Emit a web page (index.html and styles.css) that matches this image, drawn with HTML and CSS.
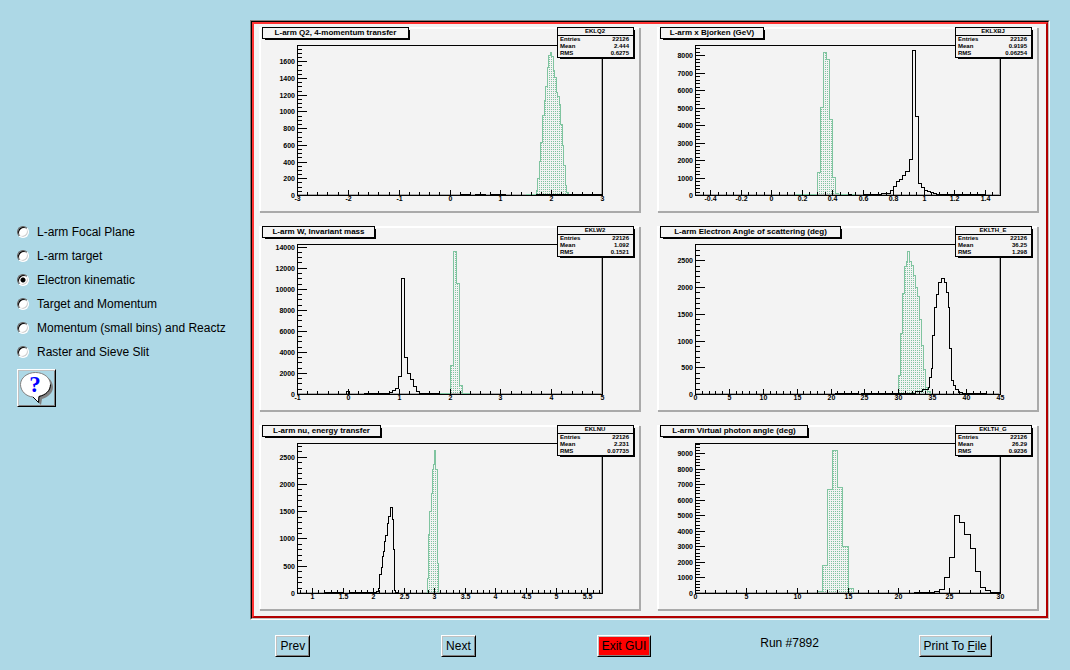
FILE: index.html
```html
<!DOCTYPE html>
<html lang="en">
<head>
    <meta charset="UTF-8">
    <meta name="viewport" content="width=device-width, initial-scale=1.0">
    <title>Online GUI - Electron kinematic</title>
    <link rel="stylesheet" href="styles.css">
</head>
<body>
    <div class="top">
        <form class="pages">
            <label class="page"><input type="radio" name="page">L-arm Focal Plane</label>
            <label class="page"><input type="radio" name="page">L-arm target</label>
            <label class="page"><input type="radio" name="page" checked>Electron kinematic</label>
            <label class="page"><input type="radio" name="page">Target and Momentum</label>
            <label class="page"><input type="radio" name="page">Momentum (small bins) and Reactz</label>
            <label class="page"><input type="radio" name="page">Raster and Sieve Slit</label>
            <button type="button" class="button help" aria-label="Help">
                <svg width="35" height="34" viewBox="2 2 35 34">
                    <path d="M20 5C29 5 36 11 36 18C36 24 31 28 25 30L24 36L18 30Z" fill="#808080"/>
                    <path d="M18.5 3.5C27 3.5 33.5 9 33.5 15.5C33.5 22 28.5 26 22 27.5L21.5 33.5L16 28C9 27.5 3.5 22 3.5 15.5C3.5 9 10 3.5 18.5 3.5Z" fill="#fff" stroke="#808080"/>
                    <path d="M33.5 15.5C33.5 22 28.5 26 22 27.5L21.5 33.5L16 28" fill="none" stroke="#000"/>
                    <text class="help-mark" x="18" y="23">?</text>
                </svg>
            </button>
        </form>
        <div class="frame">
            <div class="frame-line">
                <div class="canvas" id="canvas"></div>
            </div>
        </div>
    </div>
    <div class="controls">
        <button type="button" class="button">Prev</button>
        <button type="button" class="button">Next</button>
        <button type="button" class="button exit">Exit GUI</button>
        <span class="run">Run #7892</span>
        <button type="button" class="button">Print To <u>F</u>ile</button>
    </div>
    <script src="charts.js"></script>
</body>
</html>
```
FILE: styles.css
```css
body {
    margin: 0;
    background-color: #add8e6;
    color: #000000;
    font-family: "Liberation Sans", Arial, sans-serif;
    font-size: 12px;
}
.top {
    display: flex;
    padding: 20px 20px 0 0;
}
.pages {
    width: 233px;
    flex-shrink: 0;
    margin: 0;
    padding: 200px 0 0 17px;
}
.page {
    display: flex;
    align-items: center;
    gap: 8px;
    height: 24px;
    white-space: nowrap;
}
.page input {
    appearance: none;
    box-sizing: border-box;
    width: 12px;
    height: 12px;
    margin: 0;
    border: 1px solid;
    border-color: #606060 #ffffff #ffffff #606060;
    border-radius: 50%;
    box-shadow: inset 1px 1px #000000, inset -1px -1px #d0d0d0;
    background-color: #ffffff;
}
.page input:checked {
    background-image: radial-gradient(circle, #000000 2px, #ffffff 3px);
}
.button {
    height: 22px;
    padding: 0 4px;
    border: 1px solid;
    border-color: #ffffff #000000 #000000 #ffffff;
    border-radius: 0;
    box-shadow: inset 1px 1px #c0c0c0, inset -1px -1px #808080;
    background-color: #add8e6;
    color: #000000;
    font: inherit;
    line-height: 18px;
    cursor: pointer;
}
.help {
    display: block;
    width: 39px;
    height: 38px;
    margin-top: 5px;
    padding: 0 1px;
}
.help svg {
    display: block;
}
.help-mark {
    fill: #0000ff;
    font: bold 23px "Liberation Serif", serif;
    text-anchor: middle;
}
.exit {
    background-color: #ff0000;
}
.frame {
    flex: 1;
    border: 1px solid;
    border-color: #808080 #ffffff #ffffff #808080;
}
.frame-line {
    border: 1px solid;
    border-color: #000000 #c0c0c0 #c0c0c0 #000000;
}
.canvas {
    display: grid;
    grid-template-columns: 1fr 1fr;
    gap: 13px 16px;
    padding: 3px 7px 5px 5px;
    border: 2px solid;
    border-color: #ff3333 #b20000 #b20000 #ff3333;
    background-color: #f3f3f3;
}
.pad {
    display: block;
    width: 100%;
    shape-rendering: crispEdges;
    font-weight: bold;
}
.light {
    fill: #ffffff;
}
.shade {
    fill: #aaaaaa;
}
.shadow {
    fill: #000000;
}
.box {
    fill: #f3f3f3;
    stroke: #000000;
}
.line {
    fill: none;
    stroke: #000000;
}
.inner {
    fill: none;
    stroke: #aaaaaa;
}
.sim {
    fill: url(#dots);
    stroke: #80c4a0;
}
.dot {
    fill: #80c4a0;
}
.title {
    font-size: 8px;
    text-anchor: middle;
}
.axis {
    font-size: 7px;
}
.stats {
    font-size: 6px;
}
.middle {
    text-anchor: middle;
}
.end {
    text-anchor: end;
}
.controls {
    display: grid;
    grid-template-columns: repeat(5, 1fr);
    justify-items: center;
    align-items: start;
    padding: 15px 32px 13px 210px;
}
.run {
    line-height: 16px;
}
```
FILE: charts.js
```js
// Histograms are lists of [low edge, content], the last entry closes the range.
const plots = [
    {
        title: "L-arm Q2, 4-momentum transfer", titleWidth: 147,
        name: "EKLQ2", mean: "2.444", rms: "0.6275",
        x: [-3, 3, 1, 0.2], y: [1795, 200, 50],
        sim: [[1.5, 12], [1.7, 64], [1.73, 203], [1.76, 403], [1.79, 630], [1.82, 960], [1.85, 1133],
            [1.88, 1308], [1.91, 1528], [1.94, 1671], [1.97, 1711], [2, 1659], [2.03, 1500], [2.06, 1412],
            [2.09, 1233], [2.12, 1181], [2.15, 1089], [2.18, 850], [2.21, 602], [2.24, 363], [2.27, 124],
            [2.3, 32], [2.33, 16], [2.4, 0]],
        data: [[0.2, 9], [0.4, 0], [0.5, 9], [0.7, 0], [0.8, 9], [1.1, 0], [1.7, 9], [3, 0]]
    },
    {
        title: "L-arm x Bjorken (GeV)", titleWidth: 104,
        name: "EKLXBJ", mean: "0.9195", rms: "0.06254",
        x: [-0.5, 1.5, 0.2, 0.05], y: [8586, 1000, 200],
        sim: [[0.16, 40], [0.28, 80], [0.3, 1336], [0.32, 5037], [0.34, 8185], [0.36, 7785], [0.38, 4350],
            [0.4, 1030], [0.42, 90], [0.44, 30], [0.54, 0]],
        data: [[0.5, 40], [0.52, 0], [0.6, 40], [0.72, 90], [0.76, 110], [0.78, 267], [0.8, 515], [0.82, 800],
            [0.84, 935], [0.86, 1164], [0.88, 1374], [0.9, 2060], [0.92, 8300], [0.94, 4522], [0.96, 690],
            [0.98, 460], [1, 286], [1.02, 220], [1.04, 170], [1.06, 110], [1.08, 60], [1.4, 0]]
    },
    {
        title: "L-arm W, Invariant mass", titleWidth: 113,
        name: "EKLW2", mean: "1.092", rms: "0.1521",
        x: [-1, 5, 1, 0.2], y: [14256, 2000, 500],
        sim: [[1.8, 60], [2, 2724], [2.06, 13560], [2.12, 10581], [2.18, 824], [2.24, 60], [2.4, 0]],
        data: [[-0.04, 285], [0.02, 0], [0.32, 60], [0.8, 190], [0.86, 350], [0.92, 539], [0.98, 1680],
            [1.04, 10993], [1.1, 3485], [1.16, 1964], [1.22, 1425], [1.28, 729], [1.34, 285], [1.4, 127],
            [1.46, 60], [1.8, 0]]
    },
    {
        title: "L-arm Electron Angle of scattering (deg)", titleWidth: 181,
        name: "EKLTH_E", mean: "36.25", rms: "1.298",
        x: [0, 45, 5, 1], y: [2805, 500, 100],
        sim: [[29.4, 25], [30, 349], [30.3, 1134], [30.6, 1882], [30.9, 2400], [31.1, 2493], [31.3, 2668],
            [31.6, 2480], [31.8, 2406], [32.1, 2219], [32.4, 1995], [32.7, 1826], [33, 1409], [33.3, 910],
            [33.6, 461], [33.9, 137], [34.2, 60], [34.6, 0]],
        data: [[20.7, 12], [24, 0], [24.5, 12], [32.5, 50], [33.5, 93], [34.4, 137], [34.5, 324], [34.8, 480],
            [35, 1097], [35.3, 1620], [35.6, 1864], [35.9, 2088], [36.3, 2163], [36.8, 2088], [37, 1901],
            [37.3, 1633], [37.5, 854], [37.8, 268], [38.1, 162], [38.4, 93], [38.8, 44], [39.4, 12], [43, 0]]
    },
    {
        title: "L-arm nu, energy transfer", titleWidth: 119,
        name: "EKLNU", mean: "2.231", rms: "0.07735",
        x: [0.75, 5.75, 0.5, 0.1], y: [2751, 500, 100],
        sim: [[2.88, 269], [2.9, 1076], [2.92, 1504], [2.94, 1840], [2.96, 2280], [2.98, 2360], [3, 2616],
            [3.02, 2268], [3.04, 556], [3.06, 0]],
        data: [[1.2, 12], [1.5, 0], [1.6, 12], [2.04, 40], [2.08, 86], [2.1, 342], [2.12, 483], [2.14, 672],
            [2.16, 770], [2.18, 960], [2.2, 1070], [2.22, 1278], [2.24, 1418], [2.28, 1571], [2.3, 1351],
            [2.32, 801], [2.34, 50], [2.36, 25], [2.4, 0]]
    },
    {
        title: "L-arm Virtual photon angle (deg)", titleWidth: 148,
        name: "EKLTH_G", mean: "26.29", rms: "0.9236",
        x: [0, 30, 5, 1], y: [9643, 1000, 200],
        sim: [[10.5, 30], [12, 100], [12.5, 1779], [13, 6665], [13.5, 9172], [14, 6793], [14.5, 3000],
            [15, 300], [15.5, 30], [19, 0]],
        data: [[21.5, 40], [23.5, 107], [24, 236], [24.5, 1007], [25, 2293], [25.5, 4993], [26, 4586],
            [26.5, 3772], [27, 2872], [27.5, 1393], [28, 364], [28.5, 171], [29, 50], [30, 0]]
    }
];

const left = 38, right = 343, top_ = 18, bottom = 168;

function rect(cls, x, y, w, h) {
    return `<rect class="${cls}" x="${x}" y="${y}" width="${w}" height="${h}"/>`;
}

function text(cls, x, y, s) {
    return `<text class="${cls}" x="${x}" y="${y}">${s}</text>`;
}

function steps(bins, px, py) {
    let d = `M${px(bins[0][0])} ${bottom + 0.5}`;
    for (const [edge, value] of bins) {
        d += `H${px(edge)}V${py(value)}`;
    }
    return d;
}

function drawPad(plot) {
    const [x0, x1, xMajor, xMinor] = plot.x;
    const [yMax, yMajor, yMinor] = plot.y;
    const px = v => Math.round(left + (v - x0) / (x1 - x0) * (right - left)) + 0.5;
    const py = v => Math.round(bottom - v / yMax * (bottom - top_)) + 0.5;

    // raised pad
    let out = rect("light", 0, 0, 380, 2) + rect("light", 0, 0, 2, 184);
    out += rect("shade", 380, 1, 2, 185) + rect("shade", 1, 184, 381, 2);

    // plot frame
    out += `<path class="inner" d="M${right - 0.5} ${top_ + 1}V${bottom - 0.5}H${left + 1}"/>`;
    out += `<path class="sim" d="${steps(plot.sim, px, py)}"/>`;
    out += `<path class="line" d="${steps(plot.data, px, py)}"/>`;
    out += `<rect class="line" x="${left + 0.5}" y="${top_ + 0.5}" width="${right - left}" height="${bottom - top_}"/>`;

    // axes
    let ticks = "";
    for (let i = 0; i * yMinor <= yMax; i++) {
        const major = i * yMinor % yMajor === 0;
        ticks += `M${left} ${py(i * yMinor)}h${major ? 10 : 5}`;
        if (major) out += text("axis end", left - 2, py(i * yMinor) + 2, i * yMinor);
    }
    const perMajor = Math.round(xMajor / xMinor);
    for (let i = Math.ceil(x0 / xMinor - 0.01); i * xMinor <= x1 + 0.001; i++) {
        const major = i % perMajor === 0;
        ticks += `M${px(i * xMinor)} ${bottom}v${major ? -5 : -3}`;
        if (major) out += text("axis middle", px(i * xMinor), bottom + 6, +(i * xMinor).toFixed(1));
    }
    out += `<path class="line" d="${ticks}"/>`;

    // title
    const w = plot.titleWidth;
    out += rect("shadow", 6, 3, w - 2, 10) + rect("box", 3.5, 0.5, w - 1, 11);
    out += text("title", 3 + w / 2, 8, plot.title);

    // statistics
    out += rect("shadow", 301, 3, 75, 29) + rect("box", 298.5, 0.5, 76, 30);
    out += `<path class="line" d="M298 8.5h77"/>`;
    out += text("stats middle", 336, 6, plot.name);
    [["Entries", "22126"], ["Mean", plot.mean], ["RMS", plot.rms]].forEach(([label, value], i) => {
        out += text("stats", 301, 14 + i * 7, label) + text("stats end", 370, 14 + i * 7, value);
    });

    return `<svg class="pad" viewBox="0 0 382 186" role="img" aria-label="${plot.title}">${out}</svg>`;
}

const dots = `<svg width="0" height="0" style="position: absolute"><defs>
    <pattern id="dots" width="2" height="2" patternUnits="userSpaceOnUse">${rect("dot", 0, 0, 1, 1)}</pattern>
</defs></svg>`;

document.getElementById("canvas").innerHTML = dots + plots.map(drawPad).join("");
```
